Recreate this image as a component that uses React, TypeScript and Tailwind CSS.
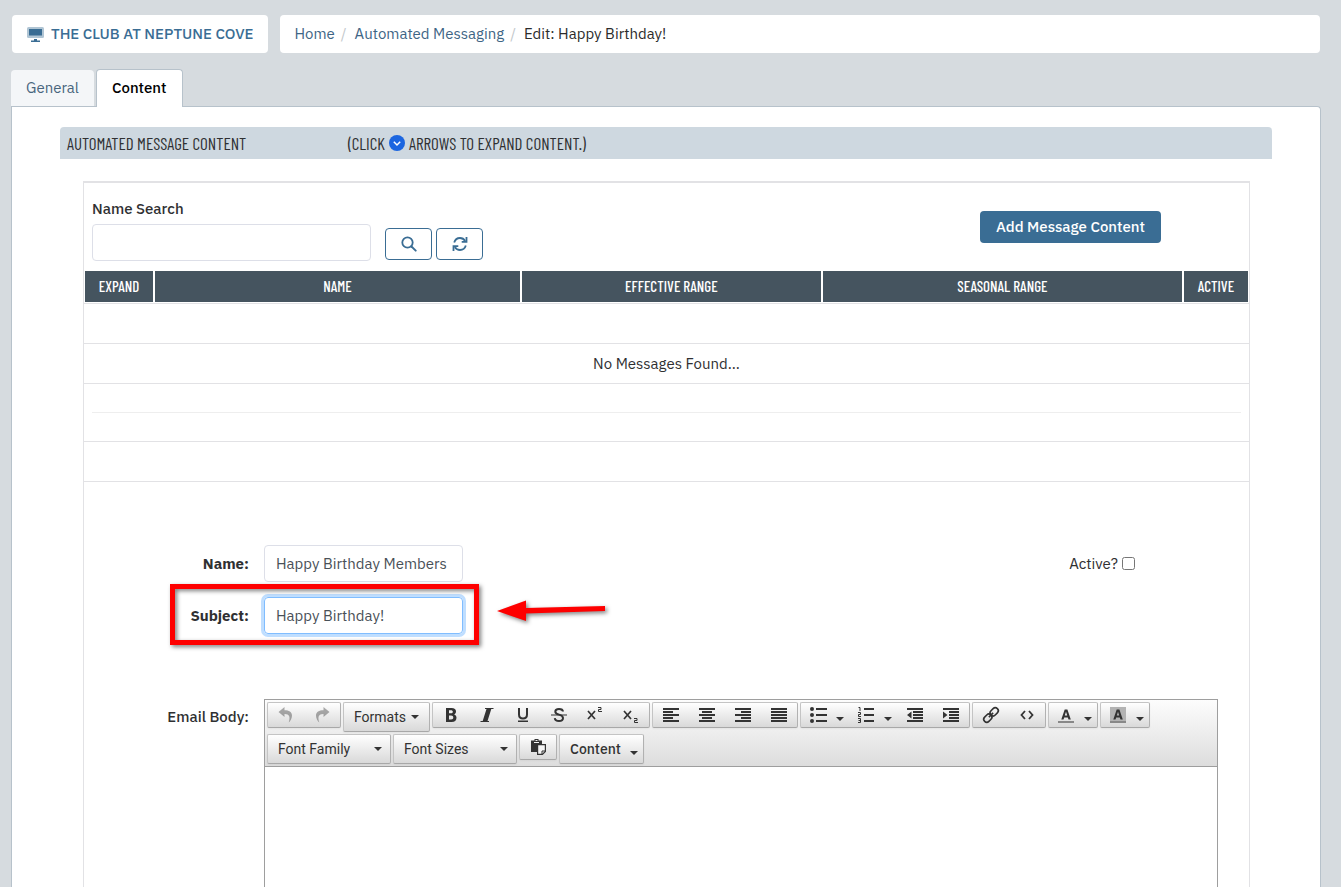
import React, { useState } from 'react';
import clsx from 'clsx';

const condensed = "font-['Barlow_Condensed','Roboto_Condensed',Roboto,sans-serif]";

const Icon: React.FC<{ children: React.ReactNode; className?: string }> = ({ children, className }) => (
  <svg viewBox="0 0 16 16" fill="currentColor" aria-hidden="true" className={clsx('w-4 h-4 shrink-0', className)}>
    {children}
  </svg>
);

const Caret: React.FC<{ className?: string }> = ({ className }) => (
  <svg viewBox="0 0 8 4" aria-hidden="true" className={clsx('w-2 h-1 shrink-0', className)}>
    <path d="M0 0h8L4 4z" fill="#333333" />
  </svg>
);

const stroke = { fill: 'none', stroke: 'currentColor' };

const icons = {
  undo: <path d="M6.5 0 .5 5l6 5V7c4.500-.2 6.200 2.500 4.200 8.500 1.800-1.500 3.300-4.300 3.300-7C14 4.800 11 3.200 6.500 3.200z" />,
  redo: <path d="M9.500 0l6 5-6 5V7C5 6.800 3.300 9.500 5.300 15.500 3.500 14 2 11.200 2 8.500 2 4.800 5 3.200 9.500 3.200z" />,
  bold: <path fillRule="evenodd" d="M3 1h5.500C11.500 1 13 2.400 13 4.500c0 1.400-.7 2.400-1.900 2.900 1.600.5 2.400 1.600 2.400 3.300 0 2.700-1.800 4.300-4.800 4.300H3zm3 2.300v3h1.800c1.300 0 2-.5 2-1.500s-.7-1.500-2-1.500zm0 5.200v4.100h2.100c1.500 0 2.200-.7 2.200-2s-.8-2.100-2.300-2.100z" />,
  italic: <path d="M6 1h8.500v1H12.300L8.500 14H10v1H1.500v-1h2.200L7.500 2H6z" />,
  underline: (
    <>
      <path {...stroke} strokeWidth="2" d="M4 1v6.500C4 10 5.500 11.500 8 11.500s4-1.500 4-4V1" />
      <path d="M3 13.500h10V15H3z" />
    </>
  ),
  strike: (
    <>
      <path {...stroke} strokeWidth="2" d="M12 4.500C11.800 2.800 10.300 2 8 2 5.500 2 4.300 3.100 4.300 4.700 4.300 8.500 12 6.800 12 11c0 1.900-1.400 3-4 3s-4-1.100-4.200-2.900" />
      <path d="M0 7.500h16v1H0z" />
    </>
  ),
  superscript: (
    <>
      <path {...stroke} strokeWidth="1.700" d="M1 4l7 8M8 4l-7 8" />
      <path {...stroke} d="M11 .5h3v2h-2.500v2H15" />
    </>
  ),
  subscript: (
    <>
      <path {...stroke} strokeWidth="1.700" d="M1 4l7 8M8 4l-7 8" />
      <path {...stroke} d="M11 11.500h3v2h-2.500v2H15" />
    </>
  ),
  left: <path d="M0 1h16v2H0zM0 4h10v2H0zM0 7h16v2H0zM0 10h10v2H0zM0 13h16v2H0z" />,
  center: <path d="M0 1h16v2H0zM3 4h10v2H3zM0 7h16v2H0zM3 10h10v2H3zM0 13h16v2H0z" />,
  right: <path d="M0 1h16v2H0zM6 4h10v2H6zM0 7h16v2H0zM6 10h10v2H6zM0 13h16v2H0z" />,
  justify: <path d="M0 1h16v2H0zM0 4h16v2H0zM0 7h16v2H0zM0 10h16v2H0zM0 13h16v2H0z" />,
  bullets: (
    <>
      <circle cx="2" cy="2" r="2" />
      <circle cx="2" cy="8" r="2" />
      <circle cx="2" cy="14" r="2" />
      <path d="M6 1h11v2H6zM6 7h11v2H6zM6 13h11v2H6z" />
    </>
  ),
  numbers: (
    <>
      <path {...stroke} d="M0.500 0.500H2V4M0 5.500h2.500v2h-2v2H3M0 11.500h2.500v4H0M.5 13.500h2" />
      <path d="M6 1h10v2H6zM6 7h10v2H6zM6 13h10v2H6z" />
    </>
  ),
  outdent: <path d="M0 1h16v2H0zM6 4h10v2H6zM6 7h10v2H6zM6 10h10v2H6zM0 13h16v2H0zM4.500 4.500v7L0 8z" />,
  indent: <path d="M0 1h16v2H0zM6 4h10v2H6zM6 7h10v2H6zM6 10h10v2H6zM0 13h16v2H0zM0 4.500v7L4.500 8z" />,
  link: (
    <g {...stroke} strokeWidth="1.600" transform="rotate(-45 8 8)">
      <rect x="-1" y="5" width="9" height="6" rx="3" />
      <rect x="8" y="5" width="9" height="6" rx="3" />
      <path d="M5 8h6" />
    </g>
  ),
  code: <path {...stroke} strokeWidth="1.800" d="M6 4L2.500 8 6 12M10 4l3.500 4-3.500 4" />,
  textColor: (
    <>
      <path fillRule="evenodd" d="M6.700 2.500h2.700l3.400 10H10.500l-.7-2H6.200l-.7 2H3.300zM6.800 8.600h2.400L8 4.700z" />
      <path d="M0 14h16v2H0z" fill="#888888" />
    </>
  ),
  backColor: (
    <>
      <path d="M0 0h16v16H0z" fill="#b3b3b3" />
      <path d="M0 14h16v2H0z" fill="#888888" />
      <path fillRule="evenodd" d="M6.700 2.500h2.700l3.400 10H10.500l-.7-2H6.200l-.7 2H3.300zM6.800 8.600h2.400L8 4.700z" />
    </>
  ),
  paste: (
    <>
      <path d="M1 1.500h3.500V0h4v1.500H12V5H7v8H1z" />
      <path d="M5.500 1h2v1h-2zM4 3h5v1H4z" fill="#f4f4f4" />
      <path d="M7.600 5.600h7.800v6.800L12.400 15.400H7.600z" fill="#f4f4f4" stroke="currentColor" strokeWidth="1.200" />
      <path {...stroke} d="M12 15v-3h3" />
    </>
  ),
};

type IconName = keyof typeof icons;
type Tool = { icon: IconName; label: string; menu?: boolean; disabled?: boolean };

const box = 'rounded-xs border border-[#c4c4c4] border-r-[#b1b1b1] border-b-[#a8a8a8] bg-linear-to-b from-white to-[#d9d9d9] shadow-xs';

const ToolGroup: React.FC<{ tools: Tool[] }> = ({ tools }) => (
  <div className={clsx('flex', box)}>
    {tools.map((tool) => (
      <button
        key={tool.label}
        type="button"
        aria-label={tool.label}
        disabled={tool.disabled}
        className={clsx(
          'flex items-center h-6 text-[#333333] disabled:opacity-40',
          tool.menu ? 'w-12 pl-[9px] gap-[10px]' : 'w-9 justify-center'
        )}
      >
        <Icon className="overflow-visible">{icons[tool.icon]}</Icon>
        {tool.menu && <Caret className="mt-2" />}
      </button>
    ))}
  </div>
);

const ToolSelect: React.FC<{ label: string; width: string; caret?: string; font?: string }> = ({
  label,
  width,
  caret = 'top-3 right-2',
  font = 'font-[Roboto,sans-serif]',
}) => (
  <div className={clsx('relative', box, width)}>
    <select
      aria-label={label}
      className={clsx('appearance-none w-full h-7 pl-[10px] pr-5 text-sm leading-5 text-[#333333] outline-none', font)}
    >
      <option>{label}</option>
    </select>
    <Caret className={clsx('absolute pointer-events-none', caret)} />
  </div>
);

const groups: Record<string, Tool[]> = {
  history: [
    { icon: 'undo', label: 'Undo', disabled: true },
    { icon: 'redo', label: 'Redo', disabled: true },
  ],
  inline: [
    { icon: 'bold', label: 'Bold' },
    { icon: 'italic', label: 'Italic' },
    { icon: 'underline', label: 'Underline' },
    { icon: 'strike', label: 'Strikethrough' },
    { icon: 'superscript', label: 'Superscript' },
    { icon: 'subscript', label: 'Subscript' },
  ],
  align: [
    { icon: 'left', label: 'Align left' },
    { icon: 'center', label: 'Align center' },
    { icon: 'right', label: 'Align right' },
    { icon: 'justify', label: 'Justify' },
  ],
  lists: [
    { icon: 'bullets', label: 'Bullet list', menu: true },
    { icon: 'numbers', label: 'Numbered list', menu: true },
    { icon: 'outdent', label: 'Decrease indent' },
    { icon: 'indent', label: 'Increase indent' },
  ],
  insert: [
    { icon: 'link', label: 'Insert link' },
    { icon: 'code', label: 'Source code' },
  ],
  color: [{ icon: 'textColor', label: 'Text color', menu: true }],
  background: [{ icon: 'backColor', label: 'Background color', menu: true }],
  paste: [{ icon: 'paste', label: 'Paste as text' }],
};

const Header: React.FC = () => (
  <header className="flex gap-3 px-px">
    <a href="#" className="flex items-center h-[38px] px-[15px] bg-white rounded-sm font-medium text-[#3a6d94] whitespace-nowrap">
      <svg viewBox="0 0 17 15" aria-hidden="true" className="w-[17px] h-[15px] mr-[7px]">
        <rect width="17" height="11" rx="1.500" fill="#b0c5d4" />
        <path d="M2 2h13v6.500H2zM7 12h3v1.500h3V15H4v-1.500h3z" fill="#3a6d94" />
      </svg>
      THE CLUB AT NEPTUNE COVE
    </a>
    <nav aria-label="Breadcrumb" className="flex flex-1 items-center h-[38px] px-[14px] bg-white rounded-sm text-[#3e6585]">
      <a href="#">Home</a>
      <span className="pl-[6px] pr-2 text-[#c3c8cc]">/</span>
      <a href="#">Automated Messaging</a>
      <span className="pl-[6px] pr-2 text-[#c3c8cc]">/</span>
      <span className="text-[#2b2b2b]">Edit: Happy Birthday!</span>
    </nav>
  </header>
);

const outlineButton = 'flex items-center justify-center w-[47px] h-8 rounded-sm border border-[#3a6d94] text-[#3a6d94]';

const SearchBar: React.FC = () => (
  <div className="flex items-start justify-between px-2 pt-4 pb-[10px]">
    <div className="flex items-end">
      <div className="flex flex-col">
        <label htmlFor="name-search" className="leading-5 mb-[5px] font-medium">Name Search</label>
        <input id="name-search" type="text" className="w-[279px] h-[37px] px-[11px] rounded-sm border border-[#dddfe8] outline-none" />
      </div>
      <div className="flex gap-1 ml-[14px] mb-px">
        <button type="button" aria-label="Search" className={outlineButton}>
          <Icon>
            <circle cx="6.500" cy="6.500" r="5.200" {...stroke} strokeWidth="1.800" />
            <path {...stroke} strokeWidth="1.900" strokeLinecap="round" d="M10.500 10.500l4.200 4.200" />
          </Icon>
        </button>
        <button type="button" aria-label="Refresh" className={outlineButton}>
          <Icon>
            <path {...stroke} strokeWidth="1.800" d="M2.200 6.500C3 3.800 5.200 2 8 2c2.200 0 4 1 5.200 3M13.800 9.500C13 12.200 10.800 14 8 14c-2.200 0-4-1-5.200-3" />
            <path {...stroke} strokeWidth="1.800" d="M14.500 1v4.800H9.700M1.500 15v-4.800h4.800" />
          </Icon>
        </button>
      </div>
    </div>
    <button type="button" className="h-8 mt-3 mr-20 px-4 rounded-sm bg-[#3a6d94] text-white font-medium whitespace-nowrap">
      Add Message Content
    </button>
  </div>
);

const MessageTable: React.FC = () => (
  <table className="w-full table-fixed border-separate border-spacing-0">
    <colgroup>
      <col className="w-[70px]" />
      <col className="w-[31.5%]" />
      <col />
      <col className="w-[31%]" />
      <col className="w-[66px]" />
    </colgroup>
    <thead className={clsx(condensed, 'text-[15px] text-white')}>
      <tr>
        {['EXPAND', 'NAME', 'EFFECTIVE RANGE', 'SEASONAL RANGE', 'ACTIVE'].map((title) => (
          <th key={title} scope="col" className="h-8 p-0 pb-px border-x border-b border-white bg-[#45545f] font-medium whitespace-nowrap">
            {title}
          </th>
        ))}
      </tr>
    </thead>
    <tbody className="[&_td]:border-t [&_td]:border-[#e2e2e5]">
      <tr><td colSpan={5} className="h-10" /></tr>
      <tr><td colSpan={5} className="h-10 text-center">No Messages Found...</td></tr>
      <tr>
        <td colSpan={5} className="h-[58px] px-2">
          <hr className="border-[#eeeeee]" />
        </td>
      </tr>
      <tr><td colSpan={5} className="h-10" /></tr>
      <tr><td colSpan={5} /></tr>
    </tbody>
  </table>
);

const field = 'w-[199px] h-[37px] px-[11px] rounded-sm border text-[#495057] outline-none';

const MessageForm: React.FC = () => {
  const [name, setName] = useState('Happy Birthday Members');
  const [subject, setSubject] = useState('Happy Birthday!');
  const [active, setActive] = useState(false);

  return (
    <form className="flex flex-1 flex-col pt-[63px]">
      <div className="grid grid-cols-[165px_1fr] gap-x-[15px] gap-y-[15px]">
        <label htmlFor="name" className="self-center text-right font-bold">Name:</label>
        <div className="flex items-center justify-between">
          <input id="name" value={name} onChange={(e) => setName(e.target.value)} className={clsx(field, 'border-[#dddfe8]')} />
          <label className="flex items-center gap-1 mr-[114px]">
            Active?
            <input type="checkbox" checked={active} onChange={(e) => setActive(e.target.checked)} className="w-[13px] h-[13px]" />
          </label>
        </div>

        <label htmlFor="subject" className="self-center text-right font-bold">Subject:</label>
        <div className="relative flex">
          <input
            id="subject"
            value={subject}
            onChange={(e) => setSubject(e.target.value)}
            className={clsx(field, 'border-[#80bdff] ring-3 ring-[#bfdeff]')}
          />
          {/* Callout around the subject row */}
          <div className="absolute -left-[94px] -top-[13px] w-[309px] h-[61px] border-5 border-[#fe0000] drop-shadow-[2px_2px_2px_rgba(0,0,0,0.5)] pointer-events-none" />
          <svg
            viewBox="0 0 112 24"
            aria-hidden="true"
            className="absolute left-[233px] top-[2px] w-28 h-6 overflow-visible pointer-events-none drop-shadow-[2px_2px_2px_rgba(0,0,0,0.5)]"
          >
            <path d="M0 12L29 1.500V9L108 7V12L29 14.500V22z" fill="#fe0000" />
          </svg>
        </div>
      </div>

      <div className="grid flex-1 grid-cols-[165px_1fr] gap-x-[15px] pt-[65px] pr-[31px]">
        <label htmlFor="body" className="pt-2 text-right font-medium">Email Body:</label>
        <div className="flex flex-col border border-b-0 border-[#9e9e9e]">
          <div role="toolbar" className="flex flex-wrap items-start gap-[2px] p-[2px] border-b border-[#9e9e9e] bg-linear-to-b from-[#fdfdfd] to-[#dddddd]">
            <ToolGroup tools={groups.history} />
            <ToolSelect label="Formats" width="w-[87px]" caret="top-3 right-[10px]" />
            <ToolGroup tools={groups.inline} />
            <ToolGroup tools={groups.align} />
            <ToolGroup tools={groups.lists} />
            <ToolGroup tools={groups.insert} />
            <ToolGroup tools={groups.color} />
            <ToolGroup tools={groups.background} />
            <ToolSelect label="Font Family" width="w-[124px]" />
            <ToolSelect label="Font Sizes" width="w-[124px]" />
            <ToolGroup tools={groups.paste} />
            <ToolSelect label="Content" width="w-[85px]" caret="top-4 right-[5px]" font="font-medium" />
          </div>
          <textarea id="body" className="flex-1 w-full p-2 resize-none outline-none" />
        </div>
      </div>
    </form>
  );
};

const App: React.FC = () => (
  <div className="flex flex-col h-screen overflow-hidden bg-[#d6dbdf] pt-[15px] pl-[11px] pr-5 font-['IBM_Plex_Sans','Noto_Sans',sans-serif] text-[15px] leading-5 text-[#2f3032]">
    <Header />

    <div role="tablist" className="flex items-end gap-[2px] mt-4">
      <button type="button" role="tab" aria-selected="false" className="h-9 px-[15px] rounded-t-sm bg-[#f4f6f8] text-[#48657d]">
        General
      </button>
      <button
        type="button"
        role="tab"
        aria-selected="true"
        className="relative z-10 h-[38px] -mb-px px-[15px] pb-px rounded-t-sm border border-b-0 border-[#b7c2cb] bg-white text-black font-medium"
      >
        Content
      </button>
    </div>

    <main className="flex flex-1 flex-col px-12 pt-5 border border-b-0 border-[#b7c2cb] rounded-tr-sm bg-white">
      <h2 className={clsx(condensed, 'flex items-center h-8 px-[7px] rounded-t-sm bg-[#ced8e0] text-[17px]')}>
        <span className="w-[281px]">AUTOMATED MESSAGE CONTENT</span>
        <span className="flex items-center gap-1">
          (CLICK
          <Icon>
            <circle cx="8" cy="8" r="8" fill="#1c66e0" />
            <path d="M4.800 6.800L8 10l3.200-3.200" fill="none" stroke="#ffffff" strokeWidth="1.500" />
          </Icon>
          ARROWS TO EXPAND CONTENT.)
        </span>
      </h2>
      <section className="flex flex-1 flex-col ml-[23px] mr-[22px] mt-[22px] border-x border-t-2 border-[#e2e2e5]">
        <SearchBar />
        <MessageTable />
        <MessageForm />
      </section>
    </main>
  </div>
);

export default App;
